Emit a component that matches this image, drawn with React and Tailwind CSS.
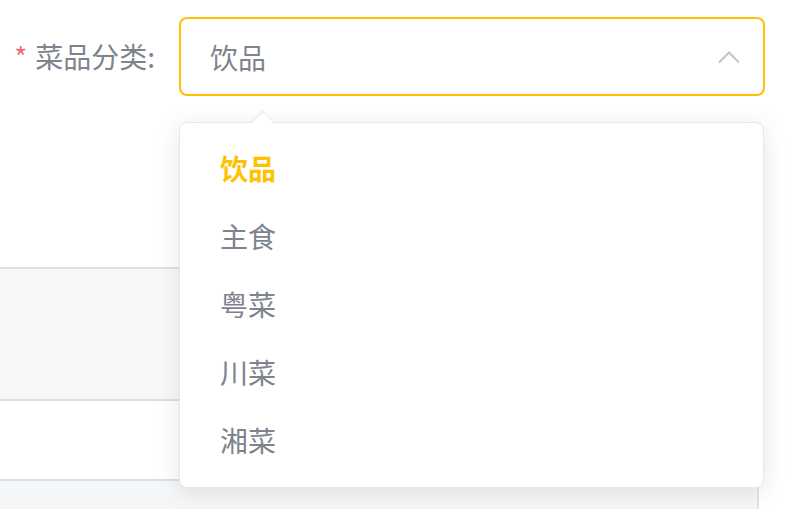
import React, { useState } from "react";

const options = ["饮品", "主食", "粤菜", "川菜", "湘菜"];

function ChevronUp() {
  return (
    <svg width="24" height="14" viewBox="0 0 24 14" fill="none">
      <path d="M2 12.5L12 2.5L22 12.5" stroke="#c0c4cc" strokeWidth="2" />
    </svg>
  );
}

export default function App() {
  const [value, setValue] = useState("饮品");

  return (
    <div
      className="relative w-[789px] h-[509px] overflow-hidden bg-white"
      style={{ fontFamily: '"Noto Sans CJK SC", "Noto Sans", sans-serif' }}
    >
      {/* form row */}
      <div className="flex items-center pt-[17px]">
        <label className="w-[179px] shrink-0 pr-[24px] text-right text-[28px] leading-[77px] text-[#7e838d]">
          <span className="mr-[8px] text-[#f56c6c]">*</span>
          菜品分类:
        </label>
        <div className="flex h-[79px] w-[586px] items-center justify-between rounded-[8px] border-2 border-[#ffc200] pl-[29px] pr-[22px]">
          <span className="text-[28px] leading-[40px] text-[#7e838d]">{value}</span>
          <ChevronUp />
        </div>
      </div>

      {/* table behind */}
      <div className="mt-[171px] w-[759px] border-r-2 border-[#e2e4ea]">
        <div className="h-[134px] border-y-2 border-[#dcdfe6] bg-[#f8f8f9]"></div>
        <div className="h-[80px] border-b-2 border-[#dcdfe6] bg-white"></div>
        <div className="h-[40px] bg-[#f5f6f7]"></div>
      </div>

      {/* dropdown */}
      <div className="absolute left-[179px] top-[122px] w-[585px] rounded-[8px] border border-[#e4e7ed] bg-white pt-[11px] pb-[13px] shadow-[0_4px_24px_0_rgba(0,0,0,0.1)]">
        <div className="absolute -top-[9px] left-[74px] h-[17px] w-[17px] rotate-45 border-l border-t border-[#e4e7ed] bg-white"></div>
        <ul className="relative">
          {options.map((o) => (
            <li
              key={o}
              onClick={() => setValue(o)}
              className={`h-[68px] cursor-pointer pl-[40px] text-[28px] leading-[68px] ${
                o === value ? "font-bold text-[#ffc200]" : "text-[#7e838d]"
              }`}
            >
              {o}
            </li>
          ))}
        </ul>
      </div>
    </div>
  );
}
